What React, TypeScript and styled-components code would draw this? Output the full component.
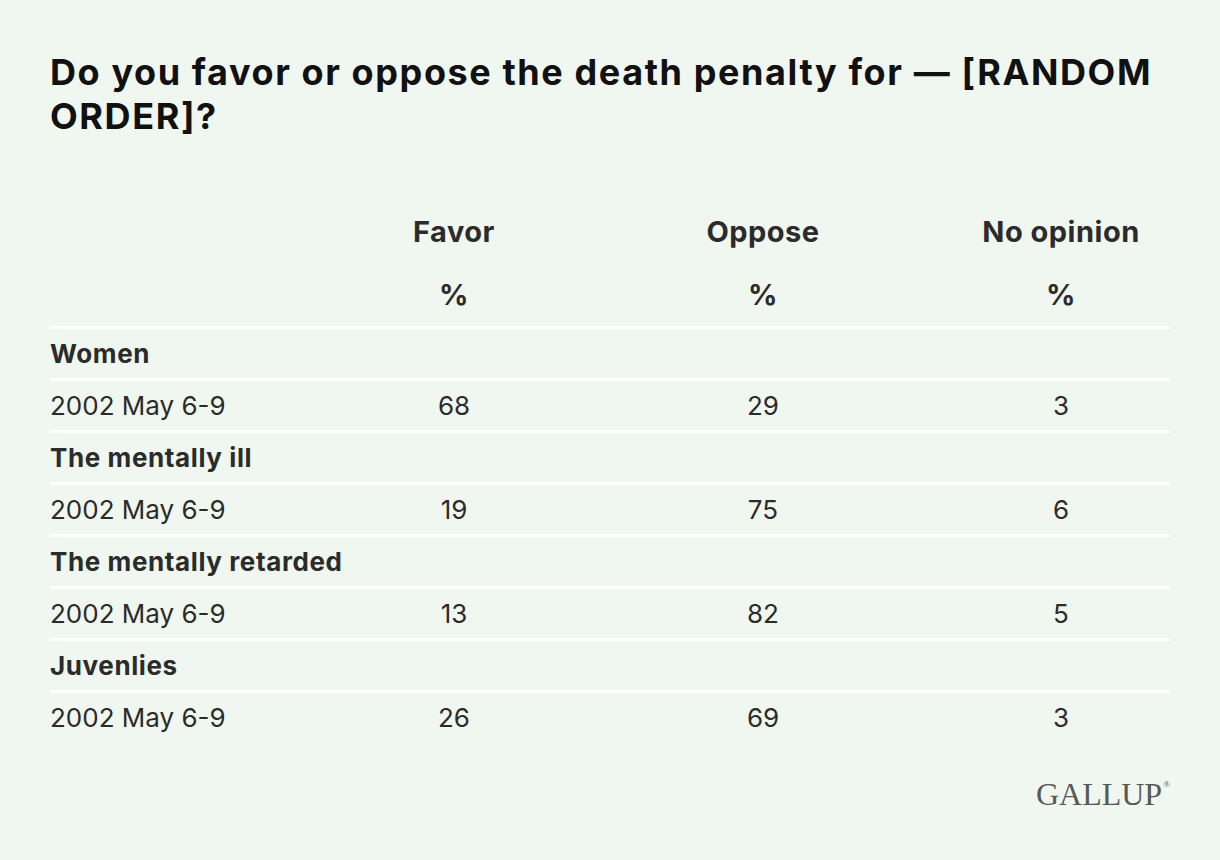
import React from "react";
import styled, { createGlobalStyle } from "styled-components";

const GlobalStyle = createGlobalStyle`
  html, body {
    margin: 0;
    padding: 0;
    background: #f0f7f0;
  }
  body {
    font-family: Inter, "Noto Sans", "Liberation Sans", sans-serif;
  }
`;

type Group = {
  label: string;
  rows: { date: string; values: string[] }[];
};

const groups: Group[] = [
  { label: "Women", rows: [{ date: "2002 May 6-9", values: ["68", "29", "3"] }] },
  { label: "The mentally ill", rows: [{ date: "2002 May 6-9", values: ["19", "75", "6"] }] },
  { label: "The mentally retarded", rows: [{ date: "2002 May 6-9", values: ["13", "82", "5"] }] },
  { label: "Juvenlies", rows: [{ date: "2002 May 6-9", values: ["26", "69", "3"] }] },
];

const columns = ["Favor", "Oppose", "No opinion"];

const App: React.FC = () => {
  return (
    <Page>
      <GlobalStyle />
      <Title>Do you favor or oppose the death penalty for — [RANDOM ORDER]?</Title>
      <Table>
        <HeadRow>
          <Cell />
          {columns.map((c) => (
            <HeadCell key={c}>{c}</HeadCell>
          ))}
        </HeadRow>
        <HeadRow>
          <Cell />
          {columns.map((c) => (
            <HeadCell key={c}>%</HeadCell>
          ))}
        </HeadRow>
        {groups.map((g) => (
          <React.Fragment key={g.label}>
            <Row>
              <GroupLabel>{g.label}</GroupLabel>
              <Cell />
              <Cell />
              <Cell />
            </Row>
            {g.rows.map((r, i) => (
              <Row key={i}>
                <Cell>{r.date}</Cell>
                {r.values.map((v, j) => (
                  <ValueCell key={j}>{v}</ValueCell>
                ))}
              </Row>
            ))}
          </React.Fragment>
        ))}
      </Table>
      <Footer>
        <Logo>
          GALLUP<Reg>®</Reg>
        </Logo>
      </Footer>
    </Page>
  );
};

const Page = styled.div`
  width: 1220px;
  height: 860px;
  box-sizing: border-box;
  padding: 50px 50px 0;
  background: #f0f7f0;
`;

const Title = styled.h1`
  margin: 0;
  font-size: 36px;
  line-height: 44px;
  font-weight: 700;
  color: #111;
  letter-spacing: 1.6px;
`;

const Table = styled.div`
  margin-top: 62px;
  display: flex;
  flex-direction: column;
`;

const Row = styled.div`
  display: grid;
  grid-template-columns: 284px 240px 378px 218px;
  align-items: center;
  height: 49px;
  border-top: 3px solid #ffffff;
  font-size: 26px;
  color: #2b2b2b;
`;

const HeadRow = styled.div`
  display: grid;
  grid-template-columns: 284px 240px 378px 218px;
  align-items: center;
  height: 63px;
`;

const Cell = styled.div`
  white-space: nowrap;
`;

const HeadCell = styled.div`
  text-align: center;
  font-size: 29px;
  font-weight: 700;
  letter-spacing: 0.5px;
  color: #2b2b2b;
`;

const GroupLabel = styled.div`
  font-weight: 700;
  letter-spacing: 0.6px;
  white-space: nowrap;
`;

const ValueCell = styled.div`
  text-align: center;
`;

const Footer = styled.div`
  display: flex;
  justify-content: flex-end;
  margin-top: 36px;
`;

const Logo = styled.div`
  font-family: "Liberation Serif", "Times New Roman", serif;
  font-size: 32px;
  color: #585858;
  line-height: 1;
  display: flex;
  align-items: flex-start;
`;

const Reg = styled.span`
  font-size: 9px;
  margin-left: 1px;
  margin-top: 2px;
`;

export default App;
